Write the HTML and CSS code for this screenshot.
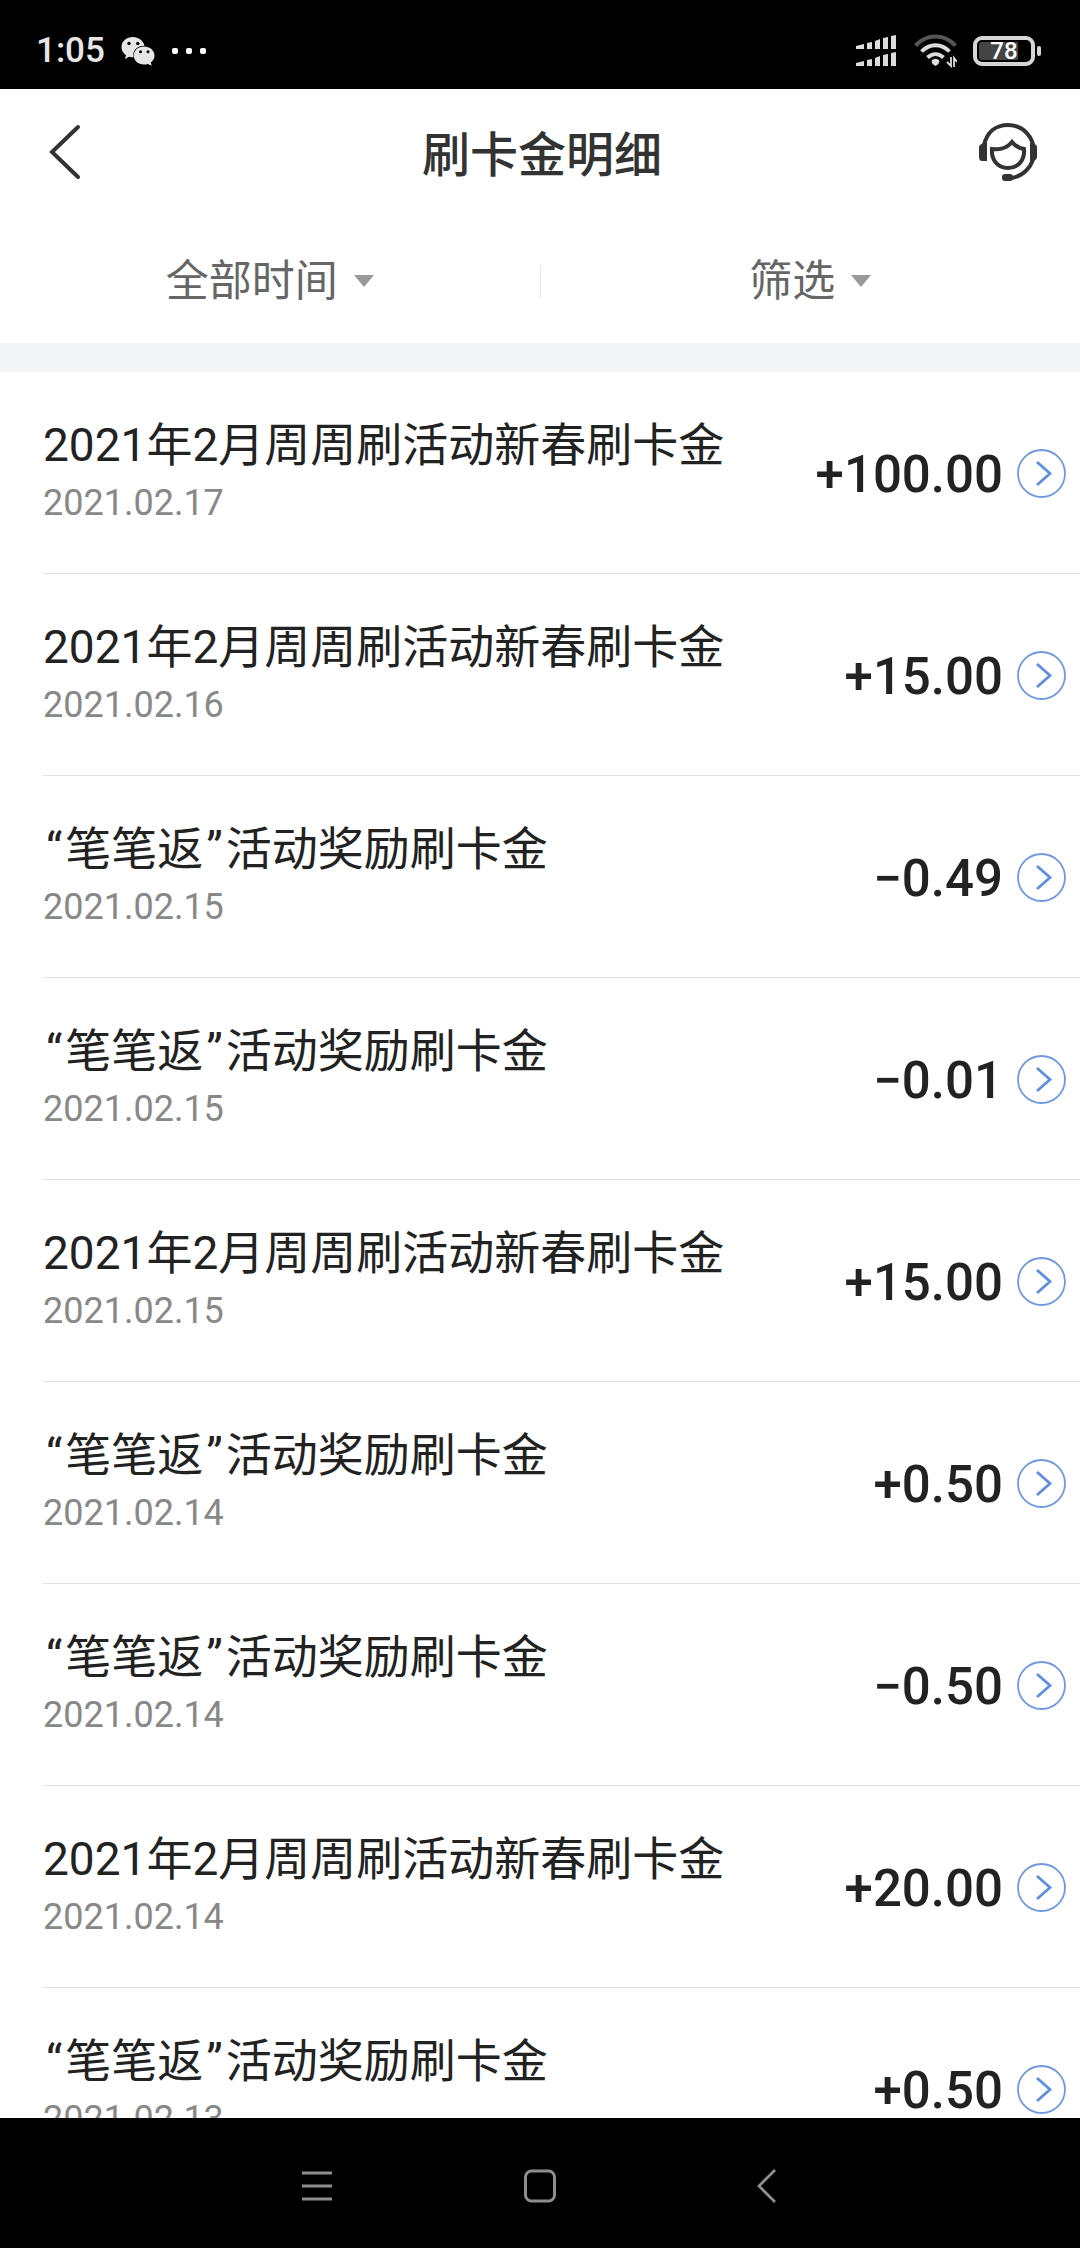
FILE: index.html
```html
<!DOCTYPE html>
<html lang="zh-CN">
<head>
<meta charset="utf-8">
<meta name="viewport" content="width=device-width">
<title>刷卡金明细</title>
<link rel="stylesheet" href="styles.css">
</head>
<body>
<svg class="defs" aria-hidden="true">
  <symbol id="go" viewBox="0 0 49 49"><circle cx="24.500" cy="24.500" r="23.500" fill="none" stroke="#7199df" stroke-width="1.800"/><path d="M20 13 33 24.500 20 36" fill="none" stroke="#5f8de0" stroke-width="2.800"/></symbol>
</svg>
<div class="status">
  <div class="status-side">
    <time class="clock">1:05</time>
    <svg class="wechat" width="34" height="30" viewBox="0 0 34 30" aria-label="微信">
      <path fill="#e6e6e6" d="M12 1C5 1 .5 5.500.5 11c0 3.500 1.700 6.300 4.500 8.200L3.800 23l4.500-2.300c1.300.4 2.700.5 4.200.5C11 14 17 9.500 23.500 9.700 22.300 4.500 17.500 1 12 1z"/>
      <path fill="#e6e6e6" d="M23 10.500c-5.800 0-10.300 3.900-10.300 9s4.500 9 10.300 9c1.400 0 2.700-.2 3.900-.6l3.800 1.800-.9-3.200c2.300-1.700 3.700-4.200 3.700-7 0-5.100-4.700-9-10.500-9z"/>
      <g fill="#000"><circle cx="8" cy="7.500" r="1.700"/><circle cx="16.800" cy="7.500" r="1.700"/><circle cx="19.500" cy="15.800" r="1.500"/><circle cx="27" cy="15.800" r="1.500"/></g>
    </svg>
    <svg width="36" height="8" viewBox="0 0 36 8" aria-hidden="true"><g fill="#fff"><rect x="1" y="1" width="6" height="6" rx="2"/><rect x="15" y="1" width="6" height="6" rx="2"/><rect x="29" y="1" width="6" height="6" rx="2"/></g></svg>
  </div>
  <div class="status-side">
    <svg width="42" height="32" viewBox="0 0 42 32" aria-label="信号"><g fill="#ddd">
      <path d="M0 11 8 9v5H0zM11 8l5-1v7h-5zM19 6l5-2v10h-5zM27 3l5-1v12h-5zM35 1l5-1v14h-5z"/>
      <path d="M0 28l8-2v5H0zM11 25l5-1v7h-5zM19 23l5-2v10h-5zM27 20l5-1v12h-5zM35 18l5-1v14h-5z"/></g></svg>
    <svg class="wifi" width="43" height="34" viewBox="0 0 43 34" aria-label="无线网络">
      <g fill="none" stroke="#ddd" stroke-width="4"><path stroke="#555" d="M1.500 11.500C13-.5 30-.5 41.500 11.500"/><path d="M7.500 17.500c8-8.500 20-8.500 28 0M13.500 23.500c5-4.500 11-4.500 16 0"/></g>
      <path fill="#ddd" d="M17.500 27c2-3 6-3 8 0l-1 3-3 2-3-2z"/><path fill="none" stroke="#ddd" stroke-width="1.800" d="M37 23v9l-4-4M40 33v-9l3 4"/>
    </svg>
    <div class="battery" role="img" aria-label="电量 78%"><span class="battery-case"><span class="level">78</span></span><span class="battery-tip"></span></div>
  </div>
</div>

<header class="appbar">
  <button class="icon-button" type="button" aria-label="返回"><svg width="34" height="58" viewBox="0 0 34 58"><path d="M31 4 5 29l26 25" fill="none" stroke="#333" stroke-width="4" stroke-linecap="round"/></svg></button>
  <h1 class="page-title">刷卡金明细</h1>
  <button class="icon-button support" type="button" aria-label="客服">
    <svg width="58" height="58" viewBox="0 0 58 58"><g fill="none" stroke="#333" stroke-width="4">
      <path d="M5 22C8 9 17 2 29 2c15 0 26 12 26 27 0 14-11 25-24 26"/><path d="M13 26c7 1 15-1 20-7 3 4 7 6 12 7 1 10-5 19-16 19S12 36 13 26z"/></g>
      <path fill="#333" d="M5 20h3v18H3c-2 0-3-2-3-4V24c0-2 2-3 5-4zM53 20c3 1 5 2 5 4v10c0 2-2 4-5 4h-2V20z"/><rect x="23" y="51" width="11" height="7" rx="3" fill="#333"/></svg>
  </button>
</header>

<nav class="filters" aria-label="筛选条件">
  <button class="filter" type="button">全部时间<span class="caret"></span></button>
  <span class="divider"></span>
  <button class="filter" type="button">筛选<span class="caret"></span></button>
</nav>

<main class="records">
  <a class="record" href="#r1"><span class="info"><span class="name">2021年2月周周刷活动新春刷卡金</span><time class="date">2021.02.17</time></span><span class="amount">+100.00</span><svg class="go"><use href="#go"/></svg></a>
  <a class="record" href="#r2"><span class="info"><span class="name">2021年2月周周刷活动新春刷卡金</span><time class="date">2021.02.16</time></span><span class="amount">+15.00</span><svg class="go"><use href="#go"/></svg></a>
  <a class="record" href="#r3"><span class="info"><span class="name"><span class="quote">“</span>笔笔返<span class="quote">”</span>活动奖励刷卡金</span><time class="date">2021.02.15</time></span><span class="amount">−0.49</span><svg class="go"><use href="#go"/></svg></a>
  <a class="record" href="#r4"><span class="info"><span class="name"><span class="quote">“</span>笔笔返<span class="quote">”</span>活动奖励刷卡金</span><time class="date">2021.02.15</time></span><span class="amount">−0.01</span><svg class="go"><use href="#go"/></svg></a>
  <a class="record" href="#r5"><span class="info"><span class="name">2021年2月周周刷活动新春刷卡金</span><time class="date">2021.02.15</time></span><span class="amount">+15.00</span><svg class="go"><use href="#go"/></svg></a>
  <a class="record" href="#r6"><span class="info"><span class="name"><span class="quote">“</span>笔笔返<span class="quote">”</span>活动奖励刷卡金</span><time class="date">2021.02.14</time></span><span class="amount">+0.50</span><svg class="go"><use href="#go"/></svg></a>
  <a class="record" href="#r7"><span class="info"><span class="name"><span class="quote">“</span>笔笔返<span class="quote">”</span>活动奖励刷卡金</span><time class="date">2021.02.14</time></span><span class="amount">−0.50</span><svg class="go"><use href="#go"/></svg></a>
  <a class="record" href="#r8"><span class="info"><span class="name">2021年2月周周刷活动新春刷卡金</span><time class="date">2021.02.14</time></span><span class="amount">+20.00</span><svg class="go"><use href="#go"/></svg></a>
  <a class="record" href="#r9"><span class="info"><span class="name"><span class="quote">“</span>笔笔返<span class="quote">”</span>活动奖励刷卡金</span><time class="date">2021.02.13</time></span><span class="amount">+0.50</span><svg class="go"><use href="#go"/></svg></a>
</main>

<nav class="system-nav" aria-label="系统导航">
  <button class="system-button" type="button" aria-label="最近任务"><svg width="40" height="36" viewBox="0 0 40 36"><path d="M9 5h30M9 18h30M9 31h30" stroke="#8e8e8e" stroke-width="2.800"/></svg></button>
  <button class="system-button" type="button" aria-label="主屏幕"><svg width="40" height="36" viewBox="0 0 40 36"><rect x="5.500" y="3" width="29" height="30" rx="6" fill="none" stroke="#8e8e8e" stroke-width="3"/></svg></button>
  <button class="system-button" type="button" aria-label="返回"><svg width="40" height="36" viewBox="0 0 40 36"><path d="M28 2 12 18 28 34" fill="none" stroke="#8e8e8e" stroke-width="2.800"/></svg></button>
</nav>
</body>
</html>
```
FILE: styles.css
```css
* { box-sizing: border-box; }

body {
  margin: 0;
  height: 100vh;
  display: flex;
  flex-direction: column;
  background: #fff;
  color: #222;
  font-family: Roboto, "Noto Sans CJK SC", sans-serif;
}

svg { display: block; flex: none; }
.defs { position: absolute; width: 0; height: 0; }

button {
  margin: 0;
  padding: 0;
  border: 0;
  background: none;
  color: inherit;
  font: inherit;
}

/* Status bar */
.status {
  flex: none;
  height: 89px;
  padding: 12px 39px 0 36px;
  display: flex;
  align-items: center;
  justify-content: space-between;
  background: #000;
  color: #e6e6e6;
}
.status-side { display: flex; align-items: center; gap: 16px; }
.clock { font-size: 35px; line-height: 40px; font-weight: 500; }
.battery { display: flex; align-items: center; gap: 2px; }
.battery-case {
  width: 62px;
  height: 30px;
  padding: 2px;
  border: 4px solid #d6d6d6;
  border-radius: 9px;
  display: flex;
}
.level {
  flex: 1;
  border-radius: 3px;
  background: linear-gradient(to right, #444 78%, #000 78%);
  color: #fff;
  font-size: 24px;
  line-height: 18px;
  font-weight: 500;
  text-align: center;
}
.battery-tip { width: 4px; height: 10px; border-radius: 2px; background: #d6d6d6; }

/* Title bar */
.appbar {
  flex: none;
  height: 130px;
  padding: 0 43px 4px 47px;
  display: grid;
  grid-template-columns: 1fr auto 1fr;
  align-items: center;
}
.icon-button { justify-self: start; }
.support { justify-self: end; }
.page-title {
  margin: 0;
  padding-top: 8px;
  color: #333;
  font-size: 48px;
  line-height: 60px;
  font-weight: 500;
}

/* Filters */
.filters {
  flex: none;
  height: 153px;
  border-bottom: 29px solid #f3f4f6;
  display: flex;
  align-items: center;
}
.filter {
  flex: 1;
  display: flex;
  align-items: center;
  justify-content: center;
  gap: 16px;
  color: #666;
  font-size: 43px;
  line-height: 60px;
}
.caret {
  border: 10px solid transparent;
  border-top: 12px solid #999;
  border-bottom: 0;
}
.divider { width: 1px; height: 33px; background: #e3e3e3; }

/* Records */
.records {
  flex: 1;
  min-height: 0;
  padding-left: 43px;
  overflow-y: auto;
  scrollbar-width: none;
}
.record {
  padding: 43px 14px 42px 0;
  border-bottom: 1px solid #e2e2e2;
  display: flex;
  align-items: center;
  color: inherit;
  text-decoration: none;
}
.info { flex: 1; display: flex; flex-direction: column; }
.name { font-size: 46px; line-height: 60px; }
.quote { padding: 0 3px; }
.date { color: #888; font-size: 36px; line-height: 56px; }
.amount { padding-top: 4px; font-size: 51px; line-height: 60px; font-weight: 500; }
.go { width: 49px; height: 49px; margin-left: 14px; }

/* System navigation */
.system-nav {
  flex: none;
  height: 130px;
  padding: 6px 200px 0;
  display: flex;
  align-items: center;
  background: #000;
}
.system-button { flex: 1; display: flex; justify-content: center; }
```
